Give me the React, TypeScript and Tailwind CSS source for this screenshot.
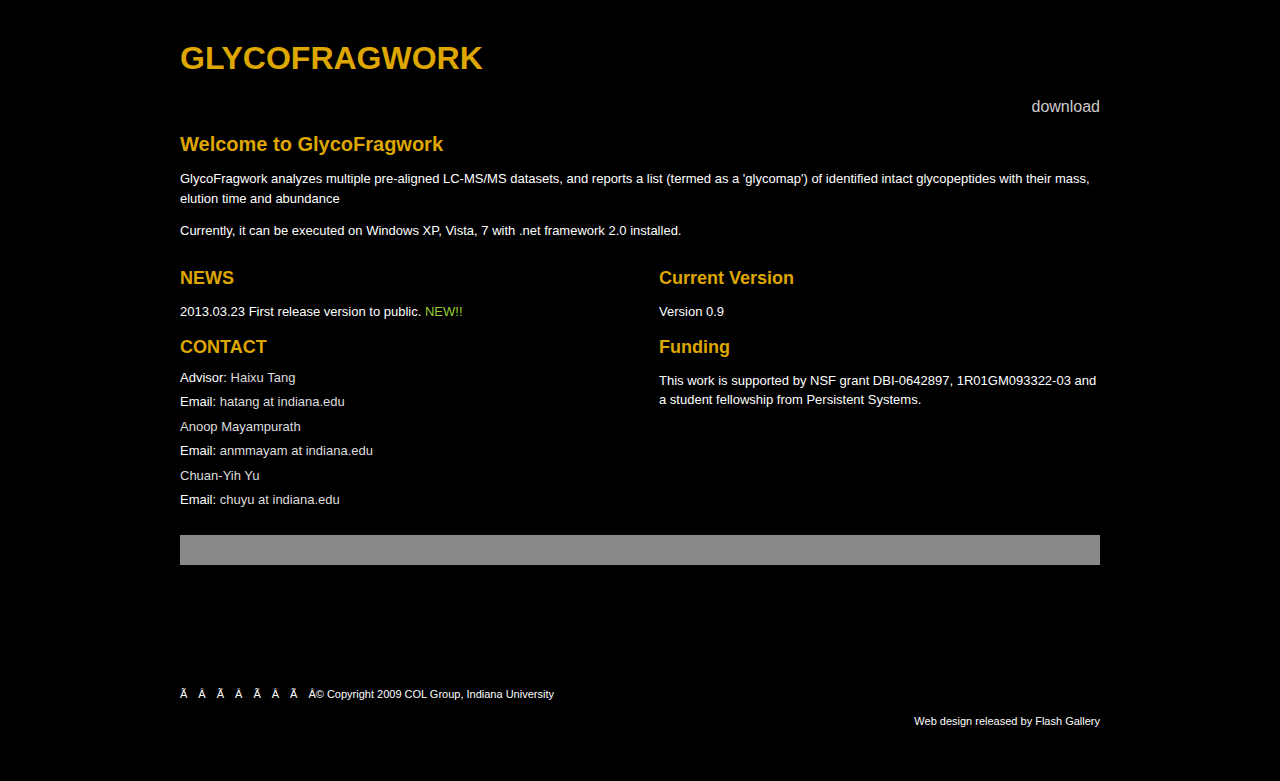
import React from 'react';

const gold = 'text-[#dea600]';

const contacts: { label?: string; value: string }[] = [
  { label: 'Advisor:', value: 'Haixu Tang' },
  { label: 'Email:', value: 'hatang at indiana.edu' },
  { value: 'Anoop Mayampurath' },
  { label: 'Email:', value: 'anmmayam at indiana.edu' },
  { value: 'Chuan-Yih Yu' },
  { label: 'Email:', value: 'chuyu at indiana.edu' },
];

const mojibake = ['Ã', 'Â', 'Ã', 'Â', 'Ã', 'Â', 'Ã'];

export default function App() {
  return (
    <div className="min-h-screen bg-black font-['Liberation_Sans',Arial,sans-serif] text-white">
      <div className="mx-auto w-[920px] pb-[40px]">
        <h1 className={`pt-[40px] text-[32px] font-bold leading-[36px] ${gold}`}>GLYCOFRAGWORK</h1>

        <div className="mt-[21px] text-right text-[16px] leading-[20px] text-[#cccccc]">download</div>

        <h2 className={`mt-[15px] text-[20px] font-bold leading-[24px] ${gold}`}>Welcome to GlycoFragwork</h2>
        <p className="mt-[13px] text-[13px] leading-[20px]">
          GlycoFragwork analyzes multiple pre-aligned LC-MS/MS datasets, and reports a list (termed as a 'glycomap') of
          identified intact glycopeptides with their mass, elution time and abundance
        </p>
        <p className="mt-[12px] text-[13px] leading-[20px]">
          Currently, it can be executed on Windows XP, Vista, 7 with .net framework 2.0 installed.
        </p>

        <div className="mt-[26px] grid grid-cols-[479px_441px]">
          {/* left column */}
          <div>
            <h3 className={`text-[18px] font-bold leading-[22px] ${gold}`}>NEWS</h3>
            <p className="mt-[13px] text-[13px] leading-[20px]">
              2013.03.23 First release version to public. <span className="text-[#99cc33]">NEW!!</span>
            </p>
            <h3 className={`mt-[14px] text-[18px] font-bold leading-[22px] ${gold}`}>CONTACT</h3>
            <div className="mt-[8px] text-[13px] leading-[24.4px]">
              {contacts.map((c, i) => (
                <div key={i}>
                  {c.label && <span className="text-white">{c.label} </span>}
                  <span className="text-[#dddddd]">{c.value}</span>
                </div>
              ))}
            </div>
          </div>

          {/* right column */}
          <div>
            <h3 className={`text-[18px] font-bold leading-[22px] ${gold}`}>Current Version</h3>
            <p className="mt-[13px] text-[13px] leading-[20px]">Version 0.9</p>
            <h3 className={`mt-[14px] text-[18px] font-bold leading-[22px] ${gold}`}>Funding</h3>
            <p className="mt-[13px] text-[13px] leading-[19px]">
              This work is supported by NSF grant DBI-0642897, 1R01GM093322-03 and a student fellowship from Persistent
              Systems.
            </p>
          </div>
        </div>

        <div className="mt-[23px] h-[30px] bg-[#888888]" />

        <div className="mt-[122px] flex text-[11px] leading-[14px]">
          {mojibake.map((ch, i) => (
            <span key={i} className="mr-[11px]">{ch}</span>
          ))}
          <span>Â© Copyright 2009 COL Group, Indiana University</span>
        </div>
        <div className="mt-[13px] text-right text-[11px] leading-[14px]">Web design released by Flash Gallery</div>
      </div>
    </div>
  );
}
